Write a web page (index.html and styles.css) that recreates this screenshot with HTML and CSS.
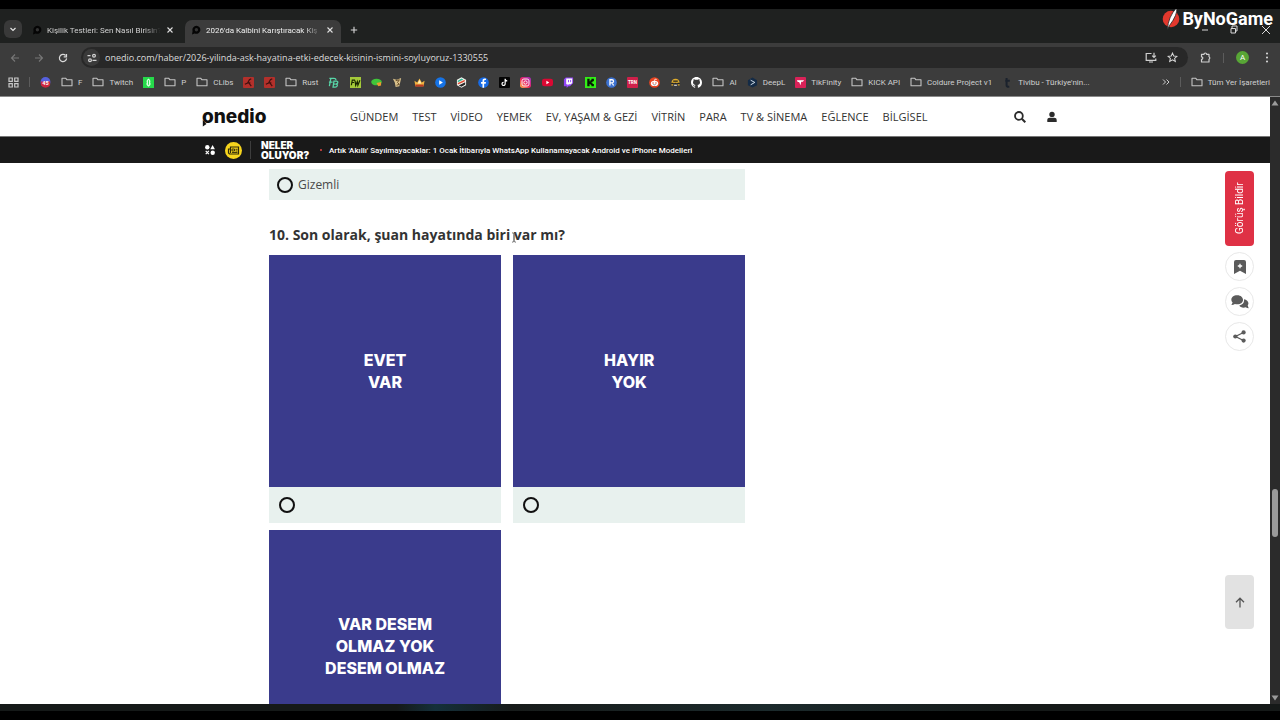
FILE: index.html
```html
<!DOCTYPE html>
<html lang="tr">
<head>
<meta charset="utf-8">
<title>2026'da Kalbini Karıştıracak Kişi</title>
<link rel="stylesheet" href="styles.css">
</head>
<body>
<svg width="0" height="0" class="defs" aria-hidden="true">
  <symbol id="folder" viewBox="0 0 12 10"><path d="M1 1.2h3.6l1.2 1.5H11v6.1H1z" fill="none" stroke="#c4c4c4" stroke-width="1.1" stroke-linejoin="round"/></symbol>
  <symbol id="fav" viewBox="0 0 10 10"><path d="M5.4.8a4 4 0 1 1-1.8 7.6L1 9.6 1.600 6A4 4 0 0 1 5.400.8z" fill="#050505"/><circle cx="5.400" cy="4.800" r="1.700" fill="#333"/></symbol>
  <symbol id="close" viewBox="0 0 8 8"><path d="M1.500 1.500l5 5m0-5l-5 5" stroke="#e0e0e0" stroke-width="1.100"/></symbol>
  <symbol id="redmark" viewBox="0 0 12 12"><rect width="12" height="12" rx="1" fill="#b3302b"/><path d="M2 8l3-1.500L7 3l2-1M6 6l3 4M5 6.500h3" stroke="#40100f" stroke-width="1.300" fill="none"/></symbol>
</svg>

<header class="browser">
  <div class="tabstrip">
    <button class="tab-search" aria-label="Sekme ara"><svg width="8" height="8" viewBox="0 0 8 8"><path d="M1.500 3L4 5.400 6.500 3" fill="none" stroke="#e4e4e4" stroke-width="1.200"/></svg></button>
    <div class="tab">
      <svg width="10" height="10"><use href="#fav"/></svg>
      <span class="tab-title">Kişilik Testleri: Sen Nasıl Birisin?</span>
      <button class="tab-close" aria-label="Kapat"><svg width="8" height="8"><use href="#close"/></svg></button>
    </div>
    <div class="tab active">
      <svg width="10" height="10"><use href="#fav"/></svg>
      <span class="tab-title">2026'da Kalbini Karıştıracak Kiş</span>
      <button class="tab-close" aria-label="Kapat"><svg width="8" height="8"><use href="#close"/></svg></button>
    </div>
    <button class="tab-new" aria-label="Yeni sekme"><svg width="8" height="8" viewBox="0 0 8 8"><path d="M4 .8v6.400M.8 4h6.400" stroke="#d8d8d8" stroke-width="1.100"/></svg></button>
  </div>

  <div class="toolbar">
    <button class="nav-button" aria-label="Geri"><svg width="10" height="10" viewBox="0 0 10 10"><path d="M9 5H1.500M5 1.500L1.500 5 5 8.500" fill="none" stroke="#777" stroke-width="1.100"/></svg></button>
    <button class="nav-button" aria-label="İleri"><svg width="10" height="10" viewBox="0 0 10 10"><path d="M1 5h7.500M5 1.500L8.500 5 5 8.500" fill="none" stroke="#777" stroke-width="1.100"/></svg></button>
    <button class="nav-button" aria-label="Yenile"><svg width="10" height="10" viewBox="0 0 10 10"><path d="M8.600 5.400A3.600 3.600 0 1 1 7.600 2.500M8.500 1v2.800H5.700" fill="none" stroke="#dadada" stroke-width="1.200"/></svg></button>
    <div class="omnibox">
      <span class="site-info"><svg width="10" height="10" viewBox="0 0 10 10"><g fill="none" stroke="#d4d4d4" stroke-width="1.200"><path d="M.5 2.700h3M5.500 7.300h4"/><circle cx="7" cy="2.700" r="1.400"/><circle cx="3" cy="7.300" r="1.400"/></g></svg></span>
      <input type="text" aria-label="Adres" value="onedio.com/haber/2026-yilinda-ask-hayatina-etki-edecek-kisinin-ismini-soyluyoruz-1330555">
      <svg width="12" height="11" viewBox="0 0 12 11"><path d="M6.500 1.500H1.200v6.800h9.600V6.500M4 10h4M9 .8v4.400M7.200 3.600L9 5.400l1.800-1.800" fill="none" stroke="#cfcfcf" stroke-width="1.200"/></svg>
      <svg width="11" height="11" viewBox="0 0 12 12"><path d="M6 1.200l1.400 3.200 3.500.3-2.600 2.300.8 3.400L6 8.600l-3.100 1.800.8-3.400L1.100 4.700l3.500-.3z" fill="none" stroke="#d8d8d8" stroke-width="1.100"/></svg>
    </div>
    <button aria-label="Uzantılar"><svg width="11" height="11" viewBox="0 0 11 11"><path d="M1.500 2.300H4a1.300 1.300 0 0 1 2.600 0h2.400v2.500a1.300 1.300 0 0 1 0 2.400V10H1.500V7.400a1.300 1.300 0 0 0 0-2.600z" fill="none" stroke="#d0d0d0" stroke-width="1.200" stroke-linejoin="round"/></svg></button>
    <span class="rule"></span>
    <button class="avatar" aria-label="Profil">A</button>
    <button class="more" aria-label="Menü"><svg width="4" height="11" viewBox="0 0 4 11" fill="#e0e0e0"><circle cx="2" cy="1.500" r="1"/><circle cx="2" cy="5.500" r="1"/><circle cx="2" cy="9.500" r="1"/></svg></button>
  </div>

  <nav class="bookmarks" aria-label="Yer işaretleri">
    <button aria-label="Uygulamalar"><svg width="11" height="11" viewBox="0 0 11 11"><g fill="none" stroke="#c8c8c8" stroke-width="1.200"><path d="M1 1h3.300v3.300H1zM6.700 1H10v3.300H6.700zM1 6.700h3.300V10H1zM6.700 6.700H10V10H6.700z"/></g></svg></button>
    <span class="rule"></span>
    <a href="#"><svg width="11" height="11" viewBox="0 0 12 12"><circle cx="6" cy="5.500" r="5.400" fill="#5661df"/><path d="M1 5h10v4a6 6 0 0 1-10 0z" fill="#cc263e"/><text x="6" y="9" text-anchor="middle" font-size="6" font-weight="700" fill="#fff">45</text></svg></a>
    <a href="#"><svg width="12" height="10"><use href="#folder"/></svg>F</a>
    <a href="#"><svg width="12" height="10"><use href="#folder"/></svg>Twitch</a>
    <a href="#"><svg width="11" height="11" viewBox="0 0 12 12"><rect width="12" height="12" fill="#25da4a"/><path d="M6 1.500c2 1.500 2.500 3 1.800 4.500 1 1.500.5 3.500-1.800 4.500-2.300-1-2.800-3-1.800-4.500C3.500 4.500 4 3 6 1.500z" fill="#d6ffdf"/><path d="M6 3.500v5" stroke="#25da4a"/></svg></a>
    <a href="#"><svg width="12" height="10"><use href="#folder"/></svg>P</a>
    <a href="#"><svg width="12" height="10"><use href="#folder"/></svg>CLibs</a>
    <a href="#"><svg width="11" height="11"><use href="#redmark"/></svg></a>
    <a href="#"><svg width="11" height="11"><use href="#redmark"/></svg></a>
    <a href="#"><svg width="12" height="10"><use href="#folder"/></svg>Rust</a>
    <div class="icon-run">
      <a href="#"><svg viewBox="0 0 12 12"><path d="M1.500 1.500h5q2.500 0 2 2M1 5.500h4M3 2L1.500 10M5.500 11l1-6.500h2.500q2.200.2 1.600 1.800-.3 1.200-1.800 1.500 1.700.3 1.300 1.700Q9.500 11 8 11zM6.500 7.800h2" fill="none" stroke="#58d6a8" stroke-width="1.400"/></svg></a>
      <a href="#"><svg viewBox="0 0 12 12"><rect width="12" height="12" fill="#a4c93a"/><path d="M1.500 9l1-5.500h3M2 6h2.500M5.500 4l.7 5 1.800-4 .6 4 2.200-5.500" fill="none" stroke="#172400" stroke-width="1.300"/></svg></a>
      <a href="#"><svg viewBox="0 0 12 12"><ellipse cx="6" cy="5.500" rx="5.800" ry="3.600" fill="#3fc53a"/><path d="M6 6.500l5-1v3.800L8 10z" fill="#e99b30"/></svg></a>
      <a href="#"><svg viewBox="0 0 12 12"><path d="M1 2l4 1 5-2-2 9-4 1-1-5z" fill="#d9c18b"/><path d="M4 4l4-1-2 3 2 2-3 1" fill="none" stroke="#614724"/></svg></a>
      <a href="#"><svg viewBox="0 0 12 12"><path d="M.5 4l3 2L6 1.500 8.500 6l3-2-1 6h-9z" fill="#f0b440"/><path d="M1.500 8.200h9v2.300h-9z" fill="#ba3c25"/><path d="M4 7l2-4 2 4z" fill="#fff1bd"/></svg></a>
      <a href="#"><svg viewBox="0 0 12 12"><circle cx="6" cy="6" r="5.800" fill="#1673e6"/><path d="M4.600 3.500v5L8.600 6z" fill="#fff"/></svg></a>
      <a href="#"><svg viewBox="0 0 12 12"><path d="M6 .2l5 2.900v5.800l-5 2.900-5-2.900V3.100z" fill="#f3f3ed"/><path d="M2 6.500L9.500 3v1.800L2 8.300z" fill="#df4b33"/><path d="M2 4l4-2.400 2 1.200L2 5.600z" fill="#2db894"/><path d="M3 9.200l7-3.500v2.500L6 10.600z" fill="#262626"/></svg></a>
      <a href="#"><svg viewBox="0 0 12 12"><circle cx="6" cy="6" r="5.800" fill="#176be6"/><path d="M6.700 11.800V7.400h1.700l.3-1.900h-2V4.400c0-.7.300-1 1-1h1V1.800C6.300 1.300 4.900 2.100 4.900 4.100v1.400H3.300v1.900h1.600v4.400z" fill="#fff"/></svg></a>
      <a href="#"><svg viewBox="0 0 12 12"><rect width="12" height="12" rx="1" fill="#050505"/><path d="M6.700 2v5.500a1.700 1.700 0 1 1-1.700-1.700M6.700 2c.2 1.500 1 2.200 2.300 2.300" fill="none" stroke="#fff" stroke-width="1.300"/></svg></a>
      <a href="#"><svg viewBox="0 0 12 12"><defs><linearGradient id="ig" x1="0" y1="1" x2="1" y2="0"><stop stop-color="#ffba45"/><stop offset=".45" stop-color="#ef275d"/><stop offset="1" stop-color="#9930c7"/></linearGradient></defs><rect width="12" height="12" rx="3" fill="url(#ig)"/><g fill="none" stroke="#fff"><rect x="2.200" y="2.200" width="7.600" height="7.600" rx="2"/><circle cx="6" cy="6" r="1.800"/></g></svg></a>
      <a href="#"><svg viewBox="0 0 12 12"><rect y="1.800" width="12" height="8.400" rx="2.600" fill="#db0833"/><path d="M4.800 4.200v3.600L7.900 6z" fill="#fff"/></svg></a>
      <a href="#"><svg viewBox="0 0 12 12"><path d="M1 2.500L3 .5h8v6.300L7.500 10H6l-2 2v-2H1z" fill="#9145f5"/><path d="M3.500 1.500H10v5L8.500 8H6.300L5 9.300V8H3.500z" fill="#fff"/><path d="M6 3.200v2.500M8.300 3.200v2.500" stroke="#9145f5"/></svg></a>
      <a href="#"><svg viewBox="0 0 12 12"><rect width="12" height="12" fill="#32ee16"/><path d="M2.500 2h2.500v2.500h1V3.300H7V2h2.700v2.700H8.300v1H7.200v.8h1.100v1h1.400V10H7V8.700H6V7.500H5V10H2.500z" fill="#071706"/></svg></a>
      <a href="#"><svg viewBox="0 0 12 12"><circle cx="6" cy="6" r="5.800" fill="#3c72d1"/><path d="M4.300 9.300V3h2.200c2.300 0 2.300 3.300 0 3.300H4.500M6.500 6.300l1.800 3" fill="none" stroke="#fff" stroke-width="1.400"/></svg></a>
      <a href="#"><svg viewBox="0 0 12 12"><rect width="12" height="12" rx="1" fill="#cf204a"/><text x="6" y="8" font-size="5" font-weight="700" text-anchor="middle" fill="#fff">TRN</text></svg></a>
      <a href="#"><svg viewBox="0 0 12 12"><circle cx="6" cy="6" r="5.800" fill="#e94522"/><ellipse cx="6" cy="7" rx="4" ry="2.800" fill="#fff"/><circle cx="4.400" cy="6.500" r=".8" fill="#e94522"/><circle cx="7.600" cy="6.500" r=".8" fill="#e94522"/><path d="M6 4.300l.5-2 2 .4" stroke="#fff" fill="none" stroke-width=".8"/><path d="M4.700 8.200q1.300.8 2.600 0" stroke="#333" fill="none" stroke-width=".6"/></svg></a>
      <a href="#"><svg viewBox="0 0 12 12"><path d="M1.500 6.500Q2 2 6 2t4.500 4.500z" fill="#dfac2c"/><path d="M3.500 4.500h5M1.500 7h2.300M5 7h2M8.200 7h2.300" fill="none" stroke="#222" stroke-width="1.200"/><path d="M1.500 8.500h2M8.500 8.500h2" stroke="#dfac2c" stroke-width="1.400"/><path d="M4.500 9h3" stroke="#e8e8e8" stroke-width="1.200"/></svg></a>
      <a href="#"><svg viewBox="0 0 16 16"><path fill="#fff" d="M8 0C3.580 0 0 3.580 0 8c0 3.540 2.290 6.530 5.470 7.590.4.070.55-.17.55-.38 0-.19-.01-.82-.01-1.490-2.010.37-2.530-.49-2.690-.94-.09-.23-.48-.94-.82-1.130-.28-.15-.68-.52-.01-.53.630-.01 1.080.58 1.230.82.720 1.210 1.870.87 2.330.66.070-.52.280-.87.510-1.070-1.780-.2-3.640-.89-3.640-3.950 0-.87.310-1.590.82-2.150-.08-.2-.36-1.020.08-2.120 0 0 .67-.21 2.200.82a7.600 7.600 0 0 1 4 0c1.530-1.040 2.200-.82 2.200-.82.440 1.100.16 1.920.08 2.120.51.560.82 1.270.82 2.150 0 3.070-1.870 3.750-3.650 3.950.29.250.54.730.54 1.480 0 1.070-.01 1.930-.01 2.200 0 .21.150.46.550.38A8 8 0 0 0 16 8c0-4.420-3.580-8-8-8z"/></svg></a>
    </div>
    <a href="#"><svg width="12" height="10"><use href="#folder"/></svg>AI</a>
    <a href="#"><svg width="11" height="11" viewBox="0 0 12 12"><path d="M6 .5l5 3v5.500l-5 2.500-5-2.500V3.500z" fill="#142b46"/><path d="M4 3.500l4.500 2.400L4 8.500" fill="none" stroke="#dce8f4"/></svg>DeepL</a>
    <a href="#"><svg width="11" height="11" viewBox="0 0 12 12"><rect width="12" height="12" rx="1" fill="#d92258"/><path d="M2 3.500h8L8.500 5.300H6.800L6 9 4.500 5.500H3z" fill="#fff"/></svg>TikFinity</a>
    <a href="#"><svg width="12" height="10"><use href="#folder"/></svg>KICK API</a>
    <a href="#"><svg width="12" height="10"><use href="#folder"/></svg>Coldure Project v1</a>
    <a href="#"><svg width="11" height="11" viewBox="0 0 12 12"><path d="M5 1v8q0 2 3 1.500M3.500 4h5" fill="none" stroke="#1b222d" stroke-width="2.200"/></svg>Tivibu - Türkiye'nin...</a>
    <button class="overflow" aria-label="Diğer yer işaretleri"><svg width="8" height="8" viewBox="0 0 8 8"><path d="M1 1.500L3.500 4 1 6.500M4.500 1.500L7 4 4.500 6.500" fill="none" stroke="#d0d0d0"/></svg></button>
    <span class="rule"></span>
    <a href="#"><svg width="12" height="10"><use href="#folder"/></svg>Tüm Yer İşaretleri</a>
  </nav>

  <div class="watermark">
    <svg width="20" height="24" viewBox="0 0 20 24"><circle cx="9" cy="12" r="8.300" fill="#e2382d"/><path d="M5.500 22.500Q6 10 14.800.5q1 7-7.300 18z" fill="#fff" stroke="#252525" stroke-width=".8"/></svg>
    <span>ByNoGame</span>
    <svg class="window-buttons" width="72" height="10" viewBox="0 0 72 10"><path d="M1 5h6M61 1l8 8m0-8l-8 8M31 3V1h5v5h-2" fill="none" stroke="#d8d8d8"/><path d="M30 3.500h4.500V8H30z" fill="none" stroke="#d8d8d8"/></svg>
  </div>
</header>

<div class="viewport">
  <div class="page">
    <header class="site-header">
      <div class="container">
        <a class="logo" href="#">onedio<svg width="6" height="7" viewBox="0 0 6 7"><path d="M.8 0v6.500L4.500 4z" fill="#111"/></svg></a>
        <nav class="site-nav">
          <a href="#">GÜNDEM</a><a href="#">TEST</a><a href="#">VİDEO</a><a href="#">YEMEK</a><a href="#">EV, YAŞAM &amp; GEZİ</a><a href="#">VİTRİN</a><a href="#">PARA</a><a href="#">TV &amp; SİNEMA</a><a href="#">EĞLENCE</a><a href="#">BİLGİSEL</a>
        </nav>
        <button aria-label="Ara"><svg width="12" height="12" viewBox="0 0 12 12"><circle cx="4.900" cy="4.900" r="3.900" fill="none" stroke="#2b2b2b" stroke-width="1.800"/><path d="M7.800 7.800l3.500 3.500" stroke="#2b2b2b" stroke-width="2"/></svg></button>
        <button aria-label="Profil"><svg width="10" height="12" viewBox="0 0 10 12" fill="#2b2b2b"><circle cx="5" cy="3.400" r="2.700"/><path d="M.3 11V9.200C.3 7.600 1.200 6.800 3 6.800h4c1.800 0 2.700.8 2.700 2.400V11z"/></svg></button>
      </div>
    </header>

    <div class="newsbar">
      <div class="container">
        <svg width="10" height="10" viewBox="0 0 10 10" fill="#fff"><circle cx="2.300" cy="2.300" r="2.200"/><path d="M7.600 0l2.300 4.300H5.300z"/><circle cx="7.700" cy="7.700" r="2.200"/><path d="M.7 5.900l3.200 3.300m0-3.300L.7 9.200" stroke="#fff" stroke-width="1.200"/></svg>
        <svg width="17" height="17" viewBox="0 0 17 17"><circle cx="8.500" cy="8.500" r="8.500" fill="#f7d51d"/><path d="M5.500 5h8v7h-9l-1-1V7h2zM5.500 7v4" fill="none" stroke="#302a09" stroke-width="1.200"/><path d="M7 7h2.500v2H7zM10.500 7.300h2M10.500 9h2M7 10.500h5.500" fill="none" stroke="#302a09" stroke-width=".9"/></svg>
        <span class="rule"></span>
        <strong><span>NELER</span><span>OLUYOR?</span></strong>
        <i class="dot"></i>
        <a href="#">Artık 'Akıllı' Sayılmayacaklar: 1 Ocak İtibarıyla WhatsApp Kullanamayacak Android ve iPhone Modelleri</a>
      </div>
    </div>

    <main class="container">
      <div class="quiz">
        <label class="answer"><input type="radio" name="q9">Gizemli</label>
        <h2>10. Son olarak, şuan hayatında biri var mı?</h2>
        <div class="tiles">
          <label class="tile"><span class="tile-art">EVET<br>VAR</span><span class="tile-pick"><input type="radio" name="q10"></span></label>
          <label class="tile"><span class="tile-art">HAYIR<br>YOK</span><span class="tile-pick"><input type="radio" name="q10"></span></label>
          <label class="tile"><span class="tile-art">VAR DESEM<br>OLMAZ YOK<br>DESEM OLMAZ</span><span class="tile-pick"><input type="radio" name="q10"></span></label>
        </div>
      </div>
    </main>

    <svg class="pointer" width="6" height="11" viewBox="0 0 6 11"><path d="M1 .8q2 0 2 1.500v6.400q0 1.500-2 1.500M5 .8q-2 0-2 1.500v6.400q0 1.500 2 1.500" fill="none" stroke="#555" stroke-width=".8"/></svg>

    <aside class="rail">
      <button class="feedback">Görüş Bildir</button>
      <button class="round" aria-label="Kaydet"><svg width="12" height="14" viewBox="0 0 12 14"><path d="M0 2q0-2 2-2h8q2 0 2 2v12l-6-3.200L0 14z" fill="#5b5b5b"/><path d="M6 3.800v4.400M3.800 6h4.400" stroke="#fff" stroke-width="1.300"/></svg></button>
      <button class="round" aria-label="Yorumlar"><svg width="18" height="14" viewBox="0 0 18 14" fill="#5b5b5b"><path d="M13 4.200c3.600.3 5.600 3.700 3.700 6.300l1 2.700q-1.700 0-2.900-1c-2.600 1-5.500.2-6.500-1.700 3.200-.5 5.300-3 4.700-6.300z"/><path d="M6.200.3c7.500 0 8 9 0 9q-1.200 0-2.300-.4Q2.300 10 .4 9.900l1.200-2.400C-1.300 4.600 1 .3 6.200.3z"/></svg></button>
      <button class="round" aria-label="Paylaş"><svg width="13" height="13" viewBox="0 0 13 13" fill="#5b5b5b"><path d="M10.500 2.500l-8 4 8 4" fill="none" stroke="#5b5b5b" stroke-width="1.300"/><circle cx="10.600" cy="2.400" r="2.100"/><circle cx="2.300" cy="6.500" r="2.100"/><circle cx="10.600" cy="10.600" r="2.100"/></svg></button>
    </aside>
    <button class="to-top" aria-label="Yukarı çık"><svg width="10" height="11" viewBox="0 0 10 11"><path d="M5 10.500V1.500M1 5.200l4-4 4 4" fill="none" stroke="#555" stroke-width="1.300"/></svg></button>
  </div>
  <div class="scrollbar">
    <svg width="8" height="6" viewBox="0 0 8 6"><path d="M4 .5L7.500 5.500h-7z" fill="#9b9b9b"/></svg>
    <span class="thumb"></span>
    <svg width="8" height="6" viewBox="0 0 8 6"><path d="M4 5.500L.5.500h7z" fill="#9b9b9b"/></svg>
  </div>
</div>
<div class="desktop-edge"></div>
</body>
</html>
```

FILE: styles.css
```css
* { box-sizing: border-box; }
body {
  margin: 0;
  height: 100vh;
  display: flex;
  flex-direction: column;
  overflow: hidden;
  background: #000;
  border: solid #000;
  border-width: 9px 0;
  font-family: "Open Sans", "Noto Sans", sans-serif;
}
button { border: 0; padding: 0; background: none; font: inherit; color: inherit; display: flex; align-items: center; justify-content: center; }
a { color: inherit; text-decoration: none; }
svg { flex: none; display: block; }
.defs { position: absolute; }
.rule { width: 1px; height: 10px; background: #5c5c5c; flex: none; }

/* Browser chrome */
.browser { position: relative; flex: none; background: #3c3c3c; color: #d0d0d0; font: 8px Roboto, sans-serif; border-bottom: 1px solid #8a8a8a; }
.tabstrip { display: flex; align-items: stretch; height: 34px; padding: 11px 4px 0; background: #1f2120; }
.tab-search { width: 18px; height: 18px; border-radius: 6px; background: #393939; }
.tab { display: flex; align-items: center; gap: 5px; width: 163px; padding: 0 11px 3px 10px; }
.tab.active { width: 156px; padding: 0 7px 3px 6px; background: #3c3c3c; border-radius: 7px 7px 0 0; color: #eee; }
.tab-title { flex: 1; min-width: 0; overflow: hidden; white-space: nowrap; mask-image: linear-gradient(90deg, #000 85%, transparent); }
.tab-new { width: 26px; padding-bottom: 3px; }

.toolbar { display: flex; align-items: center; gap: 12px; height: 29px; padding: 0 11px 0 9px; }
.nav-button { width: 12px; }
.omnibox { flex: 1; display: flex; align-items: center; gap: 10px; height: 21px; padding: 0 10px 0 2px; background: #282828; border-radius: 11px; }
.site-info { display: flex; align-items: center; justify-content: center; width: 17px; height: 17px; border-radius: 9px; background: #3a3a3a; }
.omnibox input { flex: 1; min-width: 0; margin-left: -5px; padding: 0; border: 0; outline: 0; background: none; color: #dcdcdc; font: 9px "Open Sans", sans-serif; }
.avatar { width: 13px; height: 13px; border-radius: 50%; background: #58a636; color: #fff; }
.more { margin-left: 4px; }

.bookmarks { display: flex; align-items: center; gap: 10px; height: 24px; padding: 0 10px 4px 8px; white-space: nowrap; }
.bookmarks a { display: flex; align-items: center; gap: 5px; }
.icon-run { display: flex; justify-content: space-between; width: 374px; }
.icon-run svg { width: 11px; height: 11px; }
.overflow { margin-left: auto; }

.watermark { position: absolute; top: -2px; right: 7px; display: flex; align-items: center; color: #fff; font: 700 18px/24px Roboto, sans-serif; }
.window-buttons { position: absolute; right: 0; bottom: -4px; }

/* Page and scrollbar */
.viewport { flex: 1; min-height: 0; display: flex; }
.page { position: relative; flex: 1; overflow: hidden; background: #fff; color: #333; }
.container { width: 100%; max-width: 866px; margin: 0 auto; }
.scrollbar { display: flex; flex-direction: column; align-items: center; width: 10px; padding: 3px 0; background: #2b2b2b; }
.thumb { width: 6px; height: 48px; margin: auto 0 158px; border-radius: 3px; background: #9a9a9a; }
.desktop-edge { flex: none; height: 7px; background: linear-gradient(90deg, #151918 0 31%, #14303a 34%, #171b1a 40%, #1b2a2c 60%, #151918 80%); }

.site-header .container { display: flex; align-items: center; height: 39px; }
.logo { position: relative; width: 148px; color: #111; font: 800 19px/22px Inter, sans-serif; }
.logo svg { position: absolute; left: 0; bottom: 1px; }
.site-nav { display: flex; gap: 14px; flex: 1; font-size: 11px; font-weight: 500; white-space: nowrap; }
.site-header button { width: 32px; }

.newsbar { background: #191919; border-top: 1px solid #777; color: #fff; }
.newsbar .container { display: flex; align-items: center; height: 26px; padding-left: 3px; }
.newsbar svg + svg { margin-left: 10px; }
.newsbar .rule { height: 18px; margin: 0 10px 0 8px; background: #3d3d3d; }
.newsbar strong { display: flex; flex-direction: column; width: 50px; font: 900 10px/10px Inter, sans-serif; }
.dot { width: 2px; height: 2px; margin: 0 7px 0 9px; border-radius: 50%; background: #e14646; }
.newsbar a { font: 500 8px Roboto, sans-serif; white-space: nowrap; }

/* Quiz */
.quiz { width: 55%; margin-left: 67px; padding-top: 6px; }
input[type="radio"] { appearance: none; width: 16px; height: 16px; margin: 0; border: 2px solid #111; border-radius: 50%; background: transparent; }
.answer { display: flex; align-items: center; gap: 5px; height: 31px; padding-left: 8px; background: #e8f1ee; color: #4a4a4a; font-size: 12px; }
h2 { margin: 24px 0 10px; font-size: 14px; line-height: 21px; font-weight: 700; }
.tiles { display: grid; grid-template-columns: 1fr 1fr; gap: 7px 12px; }
.tile { display: flex; flex-direction: column; }
.tile-art { display: flex; align-items: center; justify-content: center; aspect-ratio: 1; background: #3a3b8c; color: #fff; text-align: center; font: 800 16px/22px Inter, sans-serif; }
.tile-pick { display: flex; align-items: center; height: 36px; padding-left: 10px; background: #e8f1ee; }

/* Floating controls */
.pointer { position: absolute; left: 511px; top: 135px; }
.rail { position: absolute; top: 74px; right: 16px; display: flex; flex-direction: column; gap: 6px; width: 29px; }
.feedback { height: 75px; border-radius: 4px; background: #df3145; color: #fff; font: 10px Roboto, sans-serif; writing-mode: vertical-rl; transform: rotate(180deg); }
.round { width: 29px; height: 29px; border: 1px solid #e8e8e8; border-radius: 50%; background: #fff; }
.to-top { position: absolute; right: 16px; bottom: 75px; width: 29px; height: 54px; border-radius: 4px; background: #e2e2e2; }
```
